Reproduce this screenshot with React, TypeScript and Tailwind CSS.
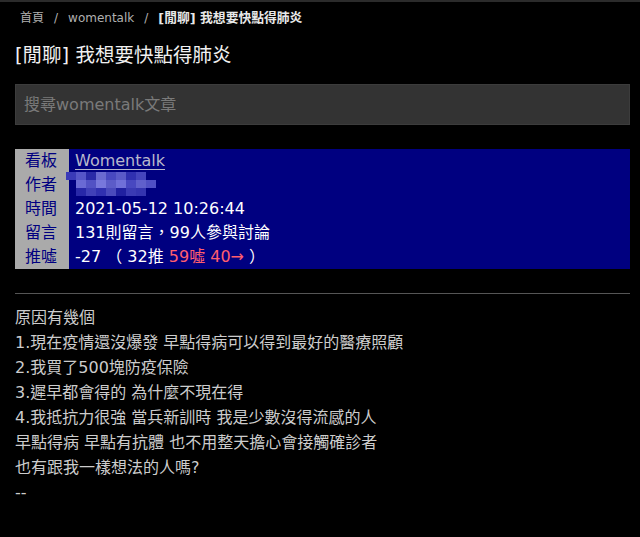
import React from 'react';

const font = { fontFamily: '"DejaVu Sans", "Noto Sans CJK TC", sans-serif' };

const metaRows: { label: string; value: React.ReactNode }[] = [
  {
    label: '看板',
    value: <span className="text-[#b8b8cc] underline underline-offset-[3px]">Womentalk</span>,
  },
  { label: '作者', value: null },
  { label: '時間', value: '2021-05-12 10:26:44' },
  { label: '留言', value: '131則留言，99人參與討論' },
  {
    label: '推噓',
    value: (
      <>
        -27 （ 32推 <span className="text-[#ff5e6e]">59噓 40→</span> ）
      </>
    ),
  },
];

// mosaic that hides the author name
const mosaic = [
  [0, 0, '#3a3ab8'], [1, 0, '#5656c8'], [2, 0, '#2a2aa8'], [3, 0, '#6a6ad0'], [4, 0, '#4848c0'], [5, 0, '#5a5ac8'], [6, 0, '#3030b0'], [7, 0, '#4444bc'],
  [1, 1, '#6a6ad4'], [2, 1, '#5252c4'], [3, 1, '#7878dc'], [4, 1, '#5c5cc8'], [5, 1, '#7070d8'], [6, 1, '#4848c0'], [7, 1, '#6060cc'], [8, 1, '#5050c4'],
  [1, 2, '#2828a8'], [2, 2, '#4040b8'], [3, 2, '#3030b0'], [4, 2, '#4a4abc'], [5, 2, '#2020a0'], [6, 2, '#3a3ab4'], [7, 2, '#3434b0'],
] as const;

const AuthorMosaic = () => (
  <svg width="92" height="24" className="-ml-[9px] -mt-[1px] block">
    {mosaic.map(([x, y, c], i) => (
      <rect key={i} x={x * 10} y={y * 8} width="10" height="8" fill={c} />
    ))}
  </svg>
);

const bodyLines = [
  '原因有幾個',
  '1.現在疫情還沒爆發 早點得病可以得到最好的醫療照顧',
  '2.我買了500塊防疫保險',
  '3.遲早都會得的 為什麼不現在得',
  '4.我抵抗力很強 當兵新訓時 我是少數沒得流感的人',
  '早點得病 早點有抗體 也不用整天擔心會接觸確診者',
  '也有跟我一樣想法的人嗎?',
  '--',
];

export default function App() {
  return (
    <div className="w-[640px] h-[537px] bg-black overflow-hidden" style={font}>
      <div className="h-[2px] bg-[#2b2b2b]" />
      <div className="pl-[15px] pr-[10px]">
        <div className="h-[32px] flex items-center pl-[5px] text-[12px] text-[#b0b0b0]">
          <span>首頁</span>
          <span className="mx-[10px]">/</span>
          <span>womentalk</span>
          <span className="mx-[10px]">/</span>
          <span className="text-[#e8e8e8] font-bold text-[12.8px]">[閒聊] 我想要快點得肺炎</span>
        </div>

        <h1 className="mt-[8px] h-[28px] leading-[28px] text-[19.5px] text-[#f0f0f0]">
          [閒聊] 我想要快點得肺炎
        </h1>

        <div className="mt-[14px] h-[41px] bg-[#333333] border border-[#3c3c3c] flex items-center pl-[8px] text-[16px] text-[#7a7a7a]">
          搜尋womentalk文章
        </div>

        <div className="mt-[24px] bg-[#000080] text-[16px]">
          {metaRows.map((row) => (
            <div key={row.label} className="flex h-[24px] leading-[24px]">
              <div className="w-[54px] shrink-0 bg-[#aaaaaa] text-[#000080] pl-[10px]">{row.label}</div>
              <div className="pl-[6px] text-white whitespace-nowrap">
                {row.value ?? <AuthorMosaic />}
              </div>
            </div>
          ))}
        </div>

        <div className="mt-[24px] h-px bg-[#555555]" />

        <div className="mt-[11px] text-[16px] leading-[25px] text-[#cccccc]">
          {bodyLines.map((line) => (
            <div key={line}>{line}</div>
          ))}
        </div>
      </div>
    </div>
  );
}
